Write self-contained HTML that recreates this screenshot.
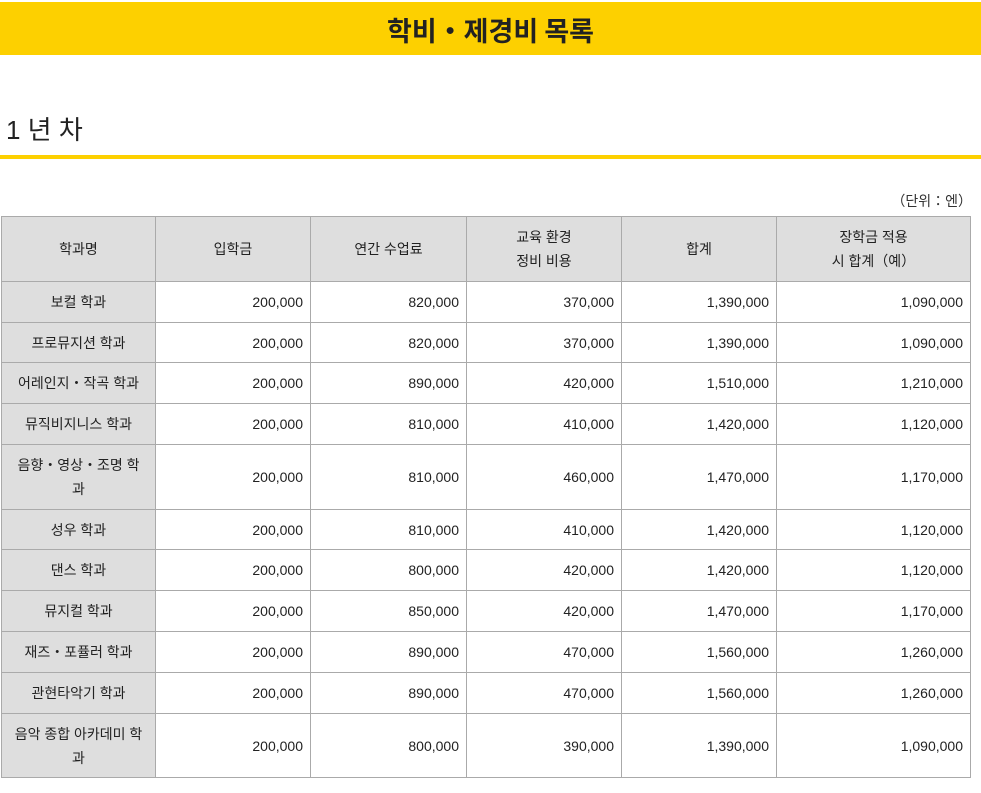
<!DOCTYPE html>
<html><head><meta charset="utf-8"><style>
body{margin:0;background:#fff;font-family:"Liberation Sans","Noto Sans CJK KR",sans-serif;color:#222;width:981px;height:793px;overflow:hidden;position:relative}
.banner{position:absolute;left:0;top:2px;width:981px;height:53px;background:#fdd000;text-align:center;font-size:27px;font-weight:bold;line-height:56px;color:#222;font-family:"Noto Sans CJK KR",sans-serif}
.h{position:absolute;left:6px;top:112px;font-size:26px;line-height:36px;color:#222}
.line{position:absolute;left:0;top:155px;width:981px;height:4px;background:#fdd000}
.unit{position:absolute;right:9px;top:191px;font-size:14px;color:#333}
table{position:absolute;left:1px;top:216px;border-collapse:collapse;table-layout:fixed;font-size:14px}
td,th{border:1px solid #aaa;padding:0 7px;font-weight:normal;line-height:24px}
th{background:#dedede;text-align:center}
td{text-align:right}
td.n{background:#dedede;text-align:center}
</style></head><body>
<div class="banner">학비・제경비 목록</div>
<div class="h">1 년 차</div>
<div class="line"></div>
<div class="unit">（단위：엔）</div>
<table>
<colgroup><col style="width:154px"><col style="width:155px"><col style="width:156px"><col style="width:155px"><col style="width:155px"><col style="width:194px"></colgroup>
<tr style="height:65px"><th>학과명</th><th>입학금</th><th>연간 수업료</th><th>교육 환경<br>정비 비용</th><th>합계</th><th>장학금 적용<br>시 합계（예）</th></tr>
<tr style="height:41px"><td class="n">보컬 학과</td><td>200,000</td><td>820,000</td><td>370,000</td><td>1,390,000</td><td>1,090,000</td></tr>
<tr style="height:40px"><td class="n">프로뮤지션 학과</td><td>200,000</td><td>820,000</td><td>370,000</td><td>1,390,000</td><td>1,090,000</td></tr>
<tr style="height:41px"><td class="n">어레인지・작곡 학과</td><td>200,000</td><td>890,000</td><td>420,000</td><td>1,510,000</td><td>1,210,000</td></tr>
<tr style="height:41px"><td class="n">뮤직비지니스 학과</td><td>200,000</td><td>810,000</td><td>410,000</td><td>1,420,000</td><td>1,120,000</td></tr>
<tr style="height:65px"><td class="n">음향・영상・조명 학<br>과</td><td>200,000</td><td>810,000</td><td>460,000</td><td>1,470,000</td><td>1,170,000</td></tr>
<tr style="height:40px"><td class="n">성우 학과</td><td>200,000</td><td>810,000</td><td>410,000</td><td>1,420,000</td><td>1,120,000</td></tr>
<tr style="height:41px"><td class="n">댄스 학과</td><td>200,000</td><td>800,000</td><td>420,000</td><td>1,420,000</td><td>1,120,000</td></tr>
<tr style="height:41px"><td class="n">뮤지컬 학과</td><td>200,000</td><td>850,000</td><td>420,000</td><td>1,470,000</td><td>1,170,000</td></tr>
<tr style="height:41px"><td class="n">재즈・포퓰러 학과</td><td>200,000</td><td>890,000</td><td>470,000</td><td>1,560,000</td><td>1,260,000</td></tr>
<tr style="height:41px"><td class="n">관현타악기 학과</td><td>200,000</td><td>890,000</td><td>470,000</td><td>1,560,000</td><td>1,260,000</td></tr>
<tr style="height:64px"><td class="n">음악 종합 아카데미 학<br>과</td><td>200,000</td><td>800,000</td><td>390,000</td><td>1,390,000</td><td>1,090,000</td></tr>
</table>
</body></html>
